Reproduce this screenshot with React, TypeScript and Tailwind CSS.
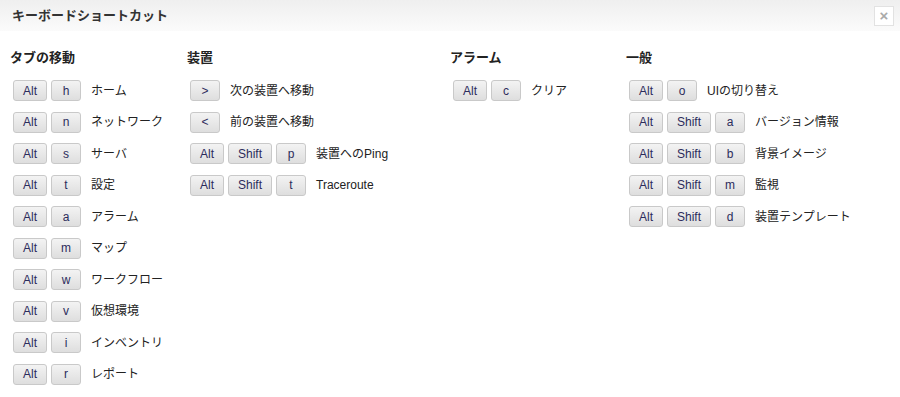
const sections: { title: string; rows: { keys: string[]; label: string }[] }[] = [
  {
    title: "タブの移動",
    rows: [
      { keys: ["Alt", "h"], label: "ホーム" },
      { keys: ["Alt", "n"], label: "ネットワーク" },
      { keys: ["Alt", "s"], label: "サーバ" },
      { keys: ["Alt", "t"], label: "設定" },
      { keys: ["Alt", "a"], label: "アラーム" },
      { keys: ["Alt", "m"], label: "マップ" },
      { keys: ["Alt", "w"], label: "ワークフロー" },
      { keys: ["Alt", "v"], label: "仮想環境" },
      { keys: ["Alt", "i"], label: "インベントリ" },
      { keys: ["Alt", "r"], label: "レポート" },
    ],
  },
  {
    title: "装置",
    rows: [
      { keys: [">"], label: "次の装置へ移動" },
      { keys: ["<"], label: "前の装置へ移動" },
      { keys: ["Alt", "Shift", "p"], label: "装置へのPing" },
      { keys: ["Alt", "Shift", "t"], label: "Traceroute" },
    ],
  },
  {
    title: "アラーム",
    rows: [{ keys: ["Alt", "c"], label: "クリア" }],
  },
  {
    title: "一般",
    rows: [
      { keys: ["Alt", "o"], label: "UIの切り替え" },
      { keys: ["Alt", "Shift", "a"], label: "バージョン情報" },
      { keys: ["Alt", "Shift", "b"], label: "背景イメージ" },
      { keys: ["Alt", "Shift", "m"], label: "監視" },
      { keys: ["Alt", "Shift", "d"], label: "装置テンプレート" },
    ],
  },
];

const colWidths = ["w-[177px]", "w-[263px]", "w-[176px]", "flex-1"];

const Key = ({ k }: { k: string }) => (
  <span className="flex h-[21px] min-w-[30px] items-center justify-center rounded-[3px] border border-[#c9c9c9] bg-gradient-to-b from-[#f3f3f3] to-[#dedede] px-[9px] text-[12px] text-[#2c2c5c]">
    {k}
  </span>
);

export default function App() {
  return (
    <div
      className="h-[397px] w-[900px] bg-white text-[#222]"
      style={{ fontFamily: '"Liberation Sans", Arial, "Noto Sans CJK JP", sans-serif' }}
    >
      <div className="flex h-[31px] items-center justify-between bg-gradient-to-b from-[#efefef] to-[#fbfbfb] pl-[12px] pr-[6px]">
        <h1 className="text-[13px] font-bold text-[#333]">キーボードショートカット</h1>
        <button className="flex h-[20px] w-[20px] items-center justify-center border border-[#e2e2e2] bg-white text-[15px] font-bold leading-none text-[#aaa]">
          ×
        </button>
      </div>

      <div className="flex pl-[10px] pt-[19px]">
        {sections.map((s, i) => (
          <div key={s.title} className={colWidths[i]}>
            <h2 className="mb-[14px] text-[13px] font-bold leading-[16px] text-[#222]">{s.title}</h2>
            <div className="flex flex-col gap-[10.5px] pl-[3px]">
              {s.rows.map((r) => (
                <div key={r.label} className="flex items-center gap-[4px] whitespace-nowrap">
                  {r.keys.map((k, j) => (
                    <Key key={j} k={k} />
                  ))}
                  <span className="ml-[6px] text-[12px] text-[#222]">{r.label}</span>
                </div>
              ))}
            </div>
          </div>
        ))}
      </div>
    </div>
  );
}
